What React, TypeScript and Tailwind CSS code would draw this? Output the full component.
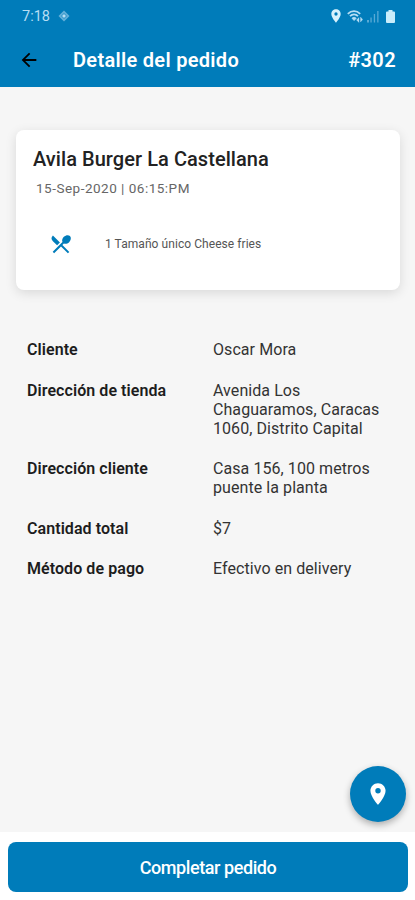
import { MdArrowBack, MdLocationOn, MdRestaurantMenu } from 'react-icons/md';

const details = [
  { label: 'Cliente', lines: ['Oscar Mora'] },
  { label: 'Dirección de tienda', lines: ['Avenida Los', 'Chaguaramos, Caracas', '1060, Distrito Capital'] },
  { label: 'Dirección cliente', lines: ['Casa 156, 100 metros', 'puente la planta'] },
  { label: 'Cantidad total', lines: ['$7'] },
  { label: 'Método de pago', lines: ['Efectivo en delivery'] },
];

const StatusBar = () => (
  <div className="flex h-8 items-center pl-[22px] pr-5 text-[#b5def4]">
    <span className="pt-[2px] text-[14.5px] leading-8">7:18</span>
    <svg viewBox="0 0 12 12" className="ml-[8px] h-3 w-3">
      <path d="M6 0.5 11.5 6 6 11.5 0.5 6Z" fill="#62b0d9" />
      <path d="M6 3 9 6 6 9 3 6Z" fill="none" stroke="#3c9bcd" strokeWidth="0.8" />
      <circle cx="6" cy="6" r="1.3" fill="#b5def4" />
    </svg>
    <div className="ml-auto flex items-center">
      <MdLocationOn size={16} className="text-[#d8f2fd]" />
      {/* wifi with traffic arrows */}
      <svg viewBox="0 0 16 14" className="ml-[3px] h-[14px] w-4" fill="none" stroke="currentColor">
        <path d="M0.8 4.8C4.5 1.2 9.5 1.2 13.2 4.8" strokeWidth="1.8" />
        <path d="M3 7.2C5.4 4.7 8.7 4.7 11 7.2" strokeWidth="1.8" />
        <path d="M5 9.3C6.3 8 7.8 8 9.2 9.3L7.1 11.5Z" fill="currentColor" strokeWidth="0.8" />
        <path d="M12 8.5v5L9.5 11ZM13.5 13V8l2.200 2.5Z" fill="currentColor" strokeWidth="0.3" />
      </svg>
      <svg viewBox="0 0 12 13" className="ml-[4px] h-[13px] w-3" fill="#58aad5">
        <path d="M0 10h2v2.5H0zM3.4 7.5h1.3v5H3.4zM6.8 4h1.3v8.5H6.8zM10.2 1h1.3v11.5h-1.3z" />
      </svg>
      <svg viewBox="0 0 9 13" className="ml-[7px] h-[13px] w-[9px]" fill="#c9edfb">
        <path d="M2.5 0h4v1.5H8a1 1 0 0 1 1 1V12a1 1 0 0 1-1 1H1a1 1 0 0 1-1-1V2.5a1 1 0 0 1 1-1h1.5Z" />
      </svg>
    </div>
  </div>
);

const Header = () => (
  <header className="h-[87px] shrink-0 bg-[#007cba]">
    <StatusBar />
    <div className="flex h-[55px] items-center pl-[18px] pr-[19px] text-white">
      <button type="button" aria-label="Volver" className="text-black">
        <MdArrowBack size={22} />
      </button>
      <h1 className="ml-[33px] text-[20px] font-semibold tracking-[0.3px]">Detalle del pedido</h1>
      <span className="ml-auto text-[20px] font-semibold tracking-[0.4px]">#302</span>
    </div>
  </header>
);

const OrderCard = () => (
  <section className="ml-4 mr-[15px] mt-[43px] h-[160px] rounded-lg bg-white px-[17px] pt-4 shadow-[0_3px_12px_rgba(0,0,0,0.12)]">
    <h2 className="text-[20px] font-medium leading-[26px] tracking-[0.06px] text-[#222]">Avila Burger La Castellana</h2>
    <p className="ml-[3px] mt-[6px] text-[13.5px] leading-5 tracking-[0.5px] text-[#666]">15-Sep-2020 | 06:15:PM</p>
    <div className="mt-[34px] flex h-6 items-center pl-4">
      <MdRestaurantMenu size={24} className="text-[#007cba]" />
      <span className="ml-[32px] text-[12px] tracking-[0.06px] text-[#555]">1 Tamaño único Cheese fries</span>
    </div>
  </section>
);

const App = () => {
  return (
    <div className="flex h-[900px] w-full flex-col overflow-hidden bg-[#f6f6f6] font-['Roboto',sans-serif]">
      <Header />
      <main className="relative flex-1">
        <div className="flow-root">
          <OrderCard />
        </div>
        <dl className="mt-[50.4px] flex flex-col gap-[21px] pl-[27px] text-[16px] leading-[19.2px] tracking-[0.07px]">
          {details.map(({ label, lines }) => (
            <div key={label} className="flex">
              <dt className="w-[186px] shrink-0 font-semibold text-[#1d1d1d]">{label}</dt>
              <dd className="text-[#333]">
                {lines.map((line) => (
                  <span key={line} className="block whitespace-nowrap">{line}</span>
                ))}
              </dd>
            </div>
          ))}
        </dl>
        <button
          type="button"
          aria-label="Ver mapa"
          className="absolute bottom-[10px] right-[9px] flex h-14 w-14 items-center justify-center rounded-full bg-[#007cba] text-white shadow-[0_3px_7px_rgba(0,0,0,0.3)]"
        >
          <MdLocationOn size={26} />
        </button>
      </main>
      <footer className="h-[68px] shrink-0 bg-white pl-2 pr-[7px] pt-[10px]">
        <button type="button" className="h-[50px] w-full rounded-lg bg-[#007cba] text-[18px] font-medium tracking-[-0.42px] text-white">
          Completar pedido
        </button>
      </footer>
    </div>
  );
};

export default App;
